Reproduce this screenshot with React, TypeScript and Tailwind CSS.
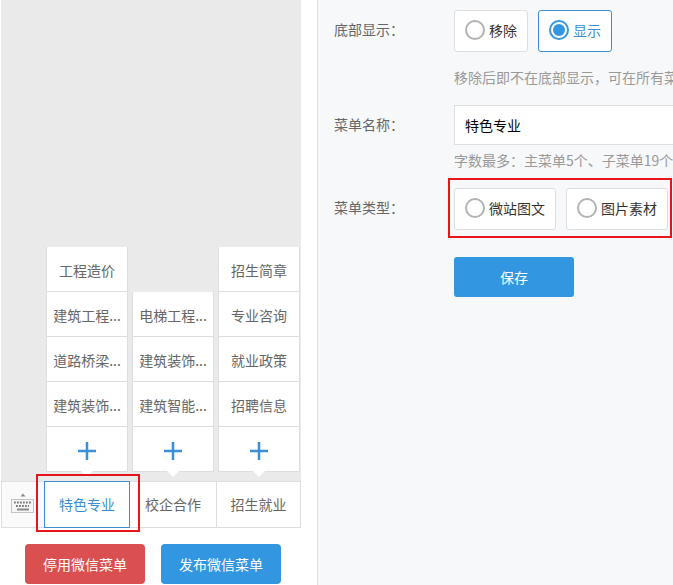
import { useState } from "react";

const menus = [
  { id: "major", name: "特色专业", items: ["工程造价", "建筑工程...", "道路桥梁...", "建筑装饰..."] },
  { id: "coop", name: "校企合作", items: ["电梯工程...", "建筑装饰...", "建筑智能..."] },
  { id: "admission", name: "招生就业", items: ["招生简章", "专业咨询", "就业政策", "招聘信息"] },
];

const types = [
  { value: "article", label: "微站图文" },
  { value: "image", label: "图片素材" },
];

function KeyboardIcon() {
  return (
    <svg width="24" height="21" viewBox="0 0 24 21" fill="none" aria-hidden="true">
      <path d="M9.500 4.500 12 1.500 14.500 4.500z" fill="#8a8a8a" />
      <rect x="0.500" y="7.500" width="22" height="13" fill="#f6f6f6" stroke="#c4c4c4" />
      <path d="M3 10.500h17M5 14h13" stroke="#7a7a7a" strokeWidth="2" strokeDasharray="1.800 1.200" />
      <path d="M6 17.500h12" stroke="#8a8a8a" strokeWidth="2" />
    </svg>
  );
}

function RadioCard({
  name,
  label,
  checked,
  onChange,
}: {
  name: string;
  label: string;
  checked: boolean;
  onChange: () => void;
}) {
  return (
    <label
      className={`flex h-[42px] shrink-0 cursor-pointer items-center gap-1 rounded-[3px] border bg-white px-2.5 pb-0.5 ${
        checked ? "border-[#3b8fd0] text-[#3b8fd0]" : "border-[#dddee2] text-[#333]"
      }`}
    >
      <input
        type="radio"
        name={name}
        checked={checked}
        onChange={onChange}
        className="h-5 w-5 appearance-none rounded-full border-2 border-[#b2b2b2] bg-white bg-clip-content p-0.5 checked:border-[#3296e0] checked:bg-[#3296e0]"
      />
      {label}
    </label>
  );
}

export default function App() {
  const [active, setActive] = useState("major");
  const [visible, setVisible] = useState(true);
  const [type, setType] = useState("");
  const [title, setTitle] = useState("特色专业");

  return (
    <div className="flex min-h-screen bg-[#f7f8fa] font-['Noto_Sans_CJK_SC',sans-serif] text-sm text-[#666]">
      {/* Phone preview */}
      <aside className="flex w-[318px] shrink-0 flex-col border-r border-[#dfe0e3] bg-white pb-px pl-px">
        <div className="flex w-[300px] grow flex-col bg-[#eaeaea]">
          <div className="mt-auto grid grid-cols-3 items-end gap-1 pr-px pb-[9px] pl-[45px]">
            {menus.map((menu) => (
              <div key={menu.id} className="relative border-x border-[#dedede] bg-white">
                <ul>
                  {menu.items.map((item) => (
                    <li key={item} className="h-[45px] border-b border-[#dedede] text-center leading-[46px]">
                      {item}
                    </li>
                  ))}
                </ul>
                <button
                  type="button"
                  aria-label="添加子菜单"
                  className="flex h-[45px] w-full items-center justify-center border-b border-[#dedede] pt-1"
                >
                  <svg width="18" height="18" viewBox="0 0 18 18" aria-hidden="true">
                    <path d="M9 0v18M0 9h18" stroke="#3b8fd8" strokeWidth="2.500" />
                  </svg>
                </button>
                <svg className="absolute top-full left-1/2 -mt-px -ml-1.5" width="12" height="6" viewBox="0 0 12 6" aria-hidden="true">
                  <path d="M0 0h12L6 6z" fill="#fff" />
                </svg>
              </div>
            ))}
          </div>
        </div>

        <nav className="relative grid h-[47px] w-[300px] grid-cols-[42px_86px_87px_1fr] border border-[#dedede] bg-white">
          <button type="button" aria-label="键盘" className="flex items-center justify-center bg-[#fafafa] pb-1">
            <KeyboardIcon />
          </button>
          {menus.map((menu) => (
            <button
              key={menu.id}
              type="button"
              onClick={() => setActive(menu.id)}
              className={
                active === menu.id
                  ? "-my-px border border-[#3b8fd0] pb-0.5 text-[#3b8fd0]"
                  : "border-r border-[#dedede] pb-0.5 last-of-type:border-r-0"
              }
            >
              {menu.name}
            </button>
          ))}
          <div className="pointer-events-none absolute -top-2 left-[34px] h-[58px] w-[104px] border-2 border-[#e8141c]" />
        </nav>

        <div className="mt-4 flex gap-4 pl-6 text-white">
          <button type="button" className="h-10 w-[120px] rounded bg-[#da4f4f]">
            停用微信菜单
          </button>
          <button type="button" className="h-10 w-[120px] rounded bg-[#3296e0]">
            发布微信菜单
          </button>
        </div>
      </aside>

      {/* Menu settings */}
      <form className="min-w-0 flex-1 overflow-hidden pt-2.5 pl-4" onSubmit={(e) => e.preventDefault()}>
        <fieldset className="flex">
          <legend className="float-left w-[120px] shrink-0 leading-[38px]">底部显示：</legend>
          <div className="min-w-0 flex-1">
            <div className="flex gap-2.5">
              <RadioCard name="visible" label="移除" checked={!visible} onChange={() => setVisible(false)} />
              <RadioCard name="visible" label="显示" checked={visible} onChange={() => setVisible(true)} />
            </div>
            <p className="mt-[15px] overflow-hidden leading-5 whitespace-nowrap text-[#999]">移除后即不在底部显示，可在所有菜</p>
          </div>
        </fieldset>

        <div className="mt-[18px] flex">
          <label htmlFor="title" className="w-[120px] shrink-0 leading-[38px]">
            菜单名称：
          </label>
          <div className="min-w-0 flex-1">
            <input
              id="title"
              type="text"
              value={title}
              onChange={(e) => setTitle(e.target.value)}
              className="h-10 w-full border border-r-0 border-[#dddee2] bg-white px-2.5 text-black"
            />
            <p className="mt-[5px] overflow-hidden leading-5 whitespace-nowrap text-[#999]">字数最多：主菜单5个、子菜单19个</p>
          </div>
        </div>

        <fieldset className="mt-[18px] flex">
          <legend className="float-left w-[120px] shrink-0 leading-[38px]">菜单类型：</legend>
          <div className="relative flex gap-2.5">
            {types.map((t) => (
              <RadioCard
                key={t.value}
                name="type"
                label={t.label}
                checked={type === t.value}
                onChange={() => setType(t.value)}
              />
            ))}
            <div className="pointer-events-none absolute -top-2.5 -right-1 -bottom-2 -left-1.5 border-2 border-[#e8141c]" />
          </div>
        </fieldset>

        <button type="submit" className="mt-[27px] ml-[120px] h-10 w-[120px] rounded-[3px] bg-[#3296e0] text-white">
          保存
        </button>
      </form>
    </div>
  );
}
